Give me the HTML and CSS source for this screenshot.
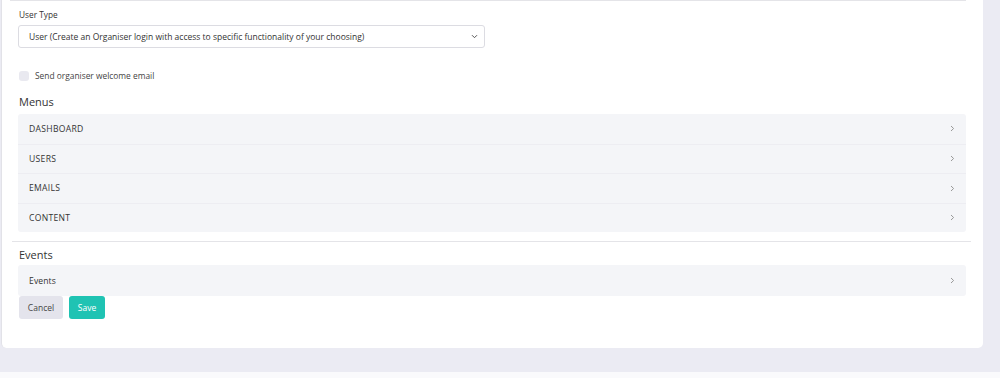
FILE: index.html
```html
<!DOCTYPE html>
<html lang="en">
<head>
  <meta charset="UTF-8">
  <meta name="viewport" content="width=device-width, initial-scale=1.0">
  <title>Edit Organiser</title>
  <link rel="stylesheet" href="styles.css">
</head>
<body>
  <div class="page">
    <div class="card">
      <div class="top-rule"></div>

      <div class="form-group">
        <label class="field-label" for="user-type">User Type</label>
        <div class="select">
          <span>User (Create an Organiser login with access to specific functionality of your choosing)</span>
          <svg class="select-arrow" width="7" height="5" viewBox="0 0 7 5"><path d="M1 1.2 L3.5 3.7 L6 1.2" fill="none" stroke="#555" stroke-width="1"/></svg>
        </div>
      </div>

      <div class="check-row">
        <span class="checkbox"></span>
        <span class="check-label">Send organiser welcome email</span>
      </div>

      <h2 class="section-title">Menus</h2>
      <div class="accordion">
        <div class="acc-row"><span>DASHBOARD</span><svg class="chev" width="5" height="7" viewBox="0 0 5 7"><path d="M1 1 L3.6 3.5 L1 6" fill="none" stroke="#999" stroke-width="1"/></svg></div>
        <div class="acc-row"><span>USERS</span><svg class="chev" width="5" height="7" viewBox="0 0 5 7"><path d="M1 1 L3.6 3.5 L1 6" fill="none" stroke="#999" stroke-width="1"/></svg></div>
        <div class="acc-row"><span>EMAILS</span><svg class="chev" width="5" height="7" viewBox="0 0 5 7"><path d="M1 1 L3.6 3.5 L1 6" fill="none" stroke="#999" stroke-width="1"/></svg></div>
        <div class="acc-row"><span>CONTENT</span><svg class="chev" width="5" height="7" viewBox="0 0 5 7"><path d="M1 1 L3.6 3.5 L1 6" fill="none" stroke="#999" stroke-width="1"/></svg></div>
      </div>

      <div class="divider"></div>

      <h2 class="section-title events-title">Events</h2>
      <div class="accordion">
        <div class="acc-row acc-tall"><span class="normal-case">Events</span><svg class="chev" width="5" height="7" viewBox="0 0 5 7"><path d="M1 1 L3.6 3.5 L1 6" fill="none" stroke="#999" stroke-width="1"/></svg></div>
      </div>

      <div class="actions">
        <button class="btn btn-cancel">Cancel</button>
        <button class="btn btn-save">Save</button>
      </div>
    </div>
  </div>
  <div class="bottom-strip"></div>
</body>
</html>
```

FILE: styles.css
```css
body {
  margin: 0;
  background: #ebebf3;
  font-family: "Open Sans", "Liberation Sans", sans-serif;
  color: #3a3a40;
}
.page {
  padding: 0 17px 24px 1px;
}
.card {
  background: #fff;
  border-left: 1px solid #e2e2e8;
  border-radius: 0 0 5px 5px;
  height: 348px;
  box-sizing: border-box;
  padding: 0 17px 0 16px;
}
.top-rule {
  height: 1px;
  background: #e4e4e8;
  margin: 0 0 0 -8px;
}
.form-group {
  padding-top: 8px;
}
.field-label {
  display: block;
  font-size: 8.3px;
  line-height: 12px;
  color: #333;
  margin-bottom: 4px;
  padding-left: 1px;
}
.select {
  width: 467px;
  height: 23px;
  box-sizing: border-box;
  border: 1px solid #dcdce2;
  border-radius: 3px;
  display: flex;
  align-items: center;
  justify-content: space-between;
  padding: 0 6px 0 10px;
  font-size: 8.5px;
  color: #333;
}
.check-row {
  display: flex;
  align-items: center;
  gap: 6px;
  margin-top: 22px;
  padding-left: 1px;
}
.checkbox {
  width: 10px;
  height: 10px;
  background: #e9e9f0;
  border-radius: 3px;
}
.check-label {
  font-size: 8.4px;
  color: #444;
}
.section-title {
  margin: 14px 0 5px 1px;
  font-size: 11px;
  line-height: 14px;
  font-weight: 400;
  color: #333;
}
.events-title {
  margin-top: 6px;
  margin-bottom: 3px;
}
.accordion {
  background: #f4f5f8;
  border-radius: 3px;
}
.acc-row {
  height: 29.5px;
  box-sizing: border-box;
  display: flex;
  align-items: center;
  justify-content: space-between;
  padding: 0 11px 0 11px;
  border-top: 1px solid #ededf2;
  font-size: 8.6px;
  letter-spacing: 0.3px;
  color: #333;
}
.acc-row:first-child {
  border-top: none;
}
.acc-tall {
  height: 31px;
}
.normal-case {
  letter-spacing: 0.1px;
}
.divider {
  height: 1px;
  background: #e4e4e8;
  margin: 9px -5px 0 -6px;
}
.actions {
  display: flex;
  gap: 6px;
  padding-left: 1px;
}
.btn {
  height: 23px;
  border: none;
  border-radius: 3px;
  font-family: "Open Sans", "Liberation Sans", sans-serif;
  font-size: 8.5px;
  padding: 0;
}
.btn-cancel {
  width: 44px;
  background: #e4e4ec;
  color: #444;
}
.btn-save {
  width: 36px;
  background: #1fc3b3;
  color: #fff;
}
.bottom-strip {
  height: 6px;
  background: #fafafc;
}
```
